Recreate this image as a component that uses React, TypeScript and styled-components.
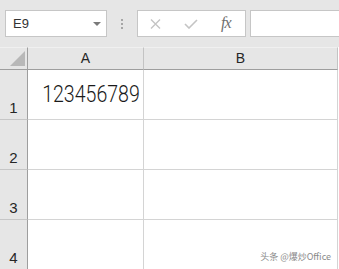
import { Fragment } from 'react'
import styled, { createGlobalStyle } from 'styled-components'

const GlobalStyle = createGlobalStyle`
  html, body {
    margin: 0;
    padding: 0;
    background: #ffffff;
    overflow: hidden;
  }
  body {
    font-family: 'Noto Sans', 'Liberation Sans', 'Noto Sans CJK SC', sans-serif;
  }
`

const StyledPage = styled.div`
  position: relative;
  width: 339px;
  height: 269px;
  overflow: hidden;
  background: #ffffff;
`

const StyledToolbar = styled.div`
  display: flex;
  align-items: center;
  height: 47px;
  padding: 10px 0 10px 5px;
  box-sizing: border-box;
  background: #e6e6e6;
`

const StyledBox = styled.div<{ $width: number }>`
  display: flex;
  align-items: center;
  flex: none;
  width: ${(p) => p.$width}px;
  height: 27px;
  box-sizing: border-box;
  background: #ffffff;
  border: 1px solid #c6c6c6;
`

const StyledNameBox = styled(StyledBox)`
  justify-content: space-between;
  padding: 0 5px 0 7px;
  font-family: 'Liberation Sans', sans-serif;
  font-size: 13px;
  color: #333333;
`

const StyledCaret = styled.span`
  width: 0;
  height: 0;
  border-left: 4px solid transparent;
  border-right: 4px solid transparent;
  border-top: 4px solid #7a7a7a;
`

const StyledGrip = styled.div`
  display: flex;
  flex-direction: column;
  gap: 2px;
  margin: 0 14px 0 14px;

  span {
    width: 2px;
    height: 2px;
    background: #a6a6a6;
  }
`

const StyledButtons = styled(StyledBox)`
  gap: 23px;
  padding: 0 0 0 12px;
  margin-right: 4px;
`

const StyledFx = styled.span`
  font-family: 'Liberation Serif', serif;
  font-style: italic;
  font-size: 16px;
  color: #6f6f6f;
  letter-spacing: -1px;
  margin-top: -2px;
`

const StyledFormula = styled(StyledBox)`
  border-right: none;
`

const StyledSheet = styled.div`
  display: grid;
  grid-template-columns: 28px 116px 194px;
  grid-template-rows: 23px repeat(4, 50px);
`

const StyledHeadCell = styled.div<{ $corner?: boolean }>`
  display: flex;
  align-items: center;
  justify-content: center;
  position: relative;
  box-sizing: border-box;
  background: #e6e6e6;
  border-top: 1px solid #f0f0f0;
  border-bottom: 1px solid #9e9e9e;
  border-right: 1px solid ${(p) => (p.$corner ? '#9e9e9e' : '#c3c3c3')};
  font-family: 'Liberation Sans', sans-serif;
  font-size: 14px;
  color: #262626;
  padding-bottom: 1px;
`

const StyledCornerMark = styled.svg`
  position: absolute;
  right: 2px;
  bottom: 3px;
`

const StyledRowHead = styled.div`
  display: flex;
  align-items: flex-end;
  justify-content: center;
  box-sizing: border-box;
  background: #e6e6e6;
  border-right: 1px solid #9e9e9e;
  border-bottom: 1px solid #c6c6c6;
  padding-bottom: 3px;
  font-family: 'Liberation Sans', sans-serif;
  font-size: 15px;
  color: #262626;
`

const StyledCell = styled.div`
  display: flex;
  align-items: center;
  justify-content: flex-end;
  box-sizing: border-box;
  border-right: 1px solid #d4d4d4;
  border-bottom: 1px solid #d4d4d4;
  padding: 0 3px 1px 0;
  overflow: hidden;
  white-space: nowrap;
`

const StyledValue = styled.span`
  display: inline-block;
  font-family: Roboto, 'Liberation Sans', sans-serif;
  font-weight: 300;
  font-size: 24px;
  color: #1a1a1a;
  transform: scaleX(0.815);
  transform-origin: right center;
`

const StyledWatermark = styled.div`
  position: absolute;
  right: 8px;
  bottom: 6px;
  font-family: 'Noto Sans CJK SC', sans-serif;
  font-size: 9px;
  color: #8a8a8a;
`

const cells: Record<string, string> = { A1: '123456789' }

export default function App() {
  const rows = [1, 2, 3, 4]

  return (
    <StyledPage>
      <GlobalStyle />
      <StyledToolbar>
        <StyledNameBox $width={102}>
          E9
          <StyledCaret />
        </StyledNameBox>
        <StyledGrip>
          <span />
          <span />
          <span />
        </StyledGrip>
        <StyledButtons $width={109}>
          <svg width="11" height="10" viewBox="0 0 11 10">
            <path d="M1 0.5 L10 9.5 M10 0.5 L1 9.5" stroke="#c4c4c4" strokeWidth="1.4" fill="none" />
          </svg>
          <svg width="14" height="10" viewBox="0 0 14 10">
            <path d="M1 5 L5 9 L13 1" stroke="#c4c4c4" strokeWidth="1.6" fill="none" />
          </svg>
          <StyledFx>fx</StyledFx>
        </StyledButtons>
        <StyledFormula $width={100} />
      </StyledToolbar>

      <StyledSheet>
        <StyledHeadCell $corner>
          <StyledCornerMark width="15" height="15" viewBox="0 0 15 15">
            <polygon points="15,0 15,15 0,15" fill="#b8b8b8" />
          </StyledCornerMark>
        </StyledHeadCell>
        <StyledHeadCell>A</StyledHeadCell>
        <StyledHeadCell>B</StyledHeadCell>
        {rows.map((r) => (
          <Fragment key={r}>
            <StyledRowHead>{r}</StyledRowHead>
            <StyledCell>{cells[`A${r}`] && <StyledValue>{cells[`A${r}`]}</StyledValue>}</StyledCell>
            <StyledCell>{cells[`B${r}`] && <StyledValue>{cells[`B${r}`]}</StyledValue>}</StyledCell>
          </Fragment>
        ))}
      </StyledSheet>

      <StyledWatermark>头条 @爆炒Office</StyledWatermark>
    </StyledPage>
  )
}
